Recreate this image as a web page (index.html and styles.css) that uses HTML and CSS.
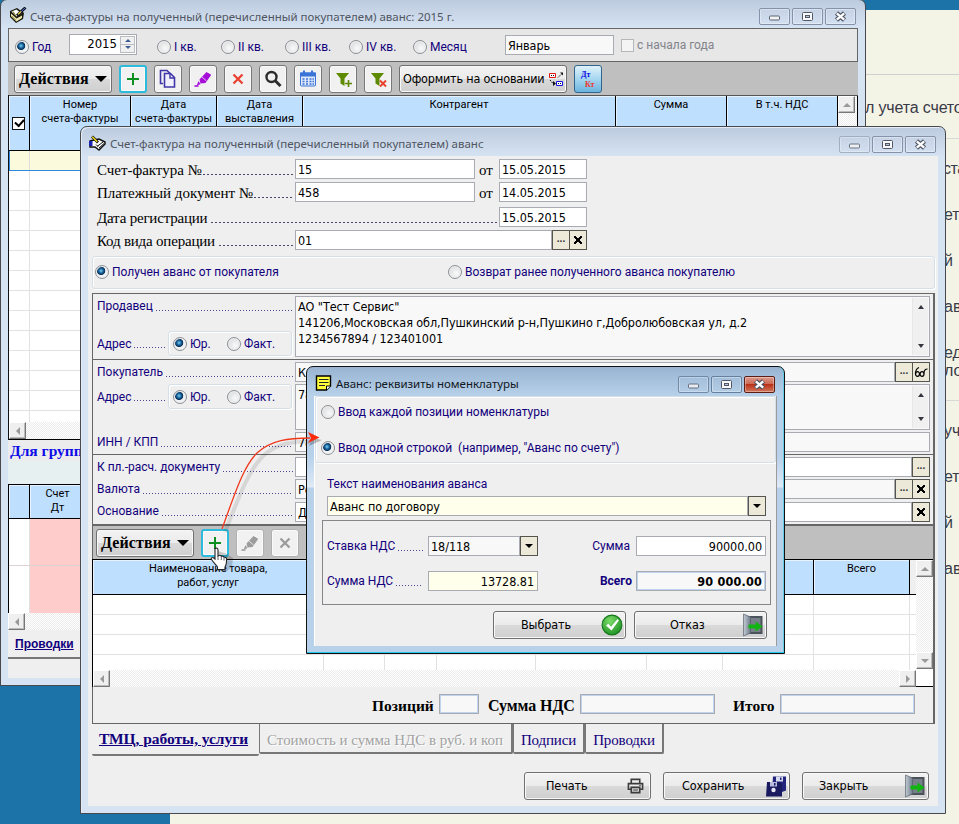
FILE: index.html
```
<!DOCTYPE html>
<html lang="ru">
<head>
<meta charset="utf-8">
<title>Счета-фактуры</title>
<link rel="stylesheet" href="styles.css">
</head>
<body>
<svg width="0" height="0" class="defs">
  <defs>
    <linearGradient id="metal" x1="0" y1="0" x2="1" y2="0"><stop offset="0" stop-color="#c4ccd4"/><stop offset="1" stop-color="#6f7c8c"/></linearGradient>
    <radialGradient id="ball" cx=".4" cy=".3" r=".8"><stop offset="0" stop-color="#7ddc6a"/><stop offset="1" stop-color="#138a1c"/></radialGradient>
    <symbol id="i-min" viewBox="0 0 29 15"><rect x="9.500" y="7" width="10" height="4" rx="1" fill="#f4f4f4" stroke="#5a6272"/></symbol>
    <symbol id="i-max" viewBox="0 0 29 15"><rect x="9.500" y="3.500" width="10" height="8" rx="1" fill="#f8f8f8" stroke="#4f5768"/><rect x="12.500" y="6.500" width="4" height="2" fill="#b8c6da" stroke="#4f5768"/></symbol>
    <symbol id="i-x" viewBox="0 0 29 15"><path d="M10.500 4l8 7M18.500 4l-8 7" stroke="#4b5263" stroke-width="4.600"/><path d="M10.800 4.300l7.400 6.400M18.200 4.300l-7.400 6.400" stroke="#fff" stroke-width="2.400"/></symbol>
    <symbol id="i-plus" viewBox="0 0 26 26"><path d="M13 7v12M7 13h12" stroke="#0e9020" stroke-width="2" fill="none"/></symbol>
    <symbol id="i-copy" viewBox="0 0 26 26"><path d="M8 17.500H5.500v-13H12l3 3" fill="none" stroke="#3f36a8" stroke-width="1.600"/><path d="M9.500 7.500h6l4 4v9.500h-10z" fill="#f2f0ff" stroke="#3f36a8" stroke-width="1.600"/><path d="M15 7.500v4.500h4.500" fill="none" stroke="#3f36a8" stroke-width="1.400"/></symbol>
    <symbol id="i-pen" viewBox="0 0 26 26"><path d="M16.500 6l5 2.500-6 8.500-5 .5-1-4z" fill="currentColor"/><path d="M12 11l4.500 4M17 5.500l5 3.500" stroke="#fff" stroke-width=".7"/><path d="M8.500 15l2 3.200-3.800 1.300z" fill="currentColor"/><path d="M4.500 20h4" stroke="currentColor" stroke-width="1.600"/></symbol>
    <symbol id="i-del" viewBox="0 0 26 26"><path d="M8.500 8.500l9 9M17.500 8.500l-9 9" stroke="currentColor" stroke-width="2.300"/></symbol>
    <symbol id="i-find" viewBox="0 0 26 26"><circle cx="11.500" cy="11" r="5" fill="none" stroke="#2c2c2c" stroke-width="2.400"/><path d="M15 14.500l5.500 5.500" stroke="#2c2c2c" stroke-width="3"/></symbol>
    <symbol id="i-cal" viewBox="0 0 26 26"><rect x="5.500" y="7" width="15" height="13" rx="1" fill="#dfe9fb" stroke="#3b74d6"/><path d="M5 6.500h16v4H5z" fill="#3b74d6"/><path d="M9 4.500v4M17 4.500v4" stroke="#3b74d6" stroke-width="2"/><path d="M7.500 13h2m1.500 0h2m1.500 0h2m1 0h1.500M7.500 15.500h2m1.500 0h2m1.500 0h2m1 0h1.500M7.500 18h2m1.500 0h2m1.500 0h2m1 0h1.500" stroke="#3b74d6" stroke-width="1.600"/></symbol>
    <symbol id="i-fadd" viewBox="0 0 26 26"><path d="M6 7h13l-4.500 5.500V20l-4-2.500v-5z" fill="#5d8a00"/><path d="M18.500 14v7M15 17.500h7" stroke="#f0f0f0" stroke-width="3.500"/><path d="M18.500 14v7M15 17.500h7" stroke="#5d8a00" stroke-width="1.600"/></symbol>
    <symbol id="i-fdel" viewBox="0 0 26 26"><path d="M6 7h13l-4.500 5.500V20l-4-2.500v-5z" fill="#5d8a00"/><path d="M15 14.500l6 6M21 14.500l-6 6" stroke="#e8412c" stroke-width="1.800"/></symbol>
    <symbol id="i-link" viewBox="0 0 15 15"><path d="M.5 1.500h6v4h-6z" fill="#fff" stroke="#e01818"/><path d="M7.500 9.500h6v4h-6z" fill="#fff" stroke="#1414e0"/><path d="M2 3.500h3M9 11.500h3" stroke="#111" stroke-dasharray="1 1"/><path d="M9 5.500l4-4M1 8l3 3.500" fill="none" stroke="#111" stroke-dasharray="1.500 1"/><path d="M11 .5h3v3zM4 9l3 2.500-3 2.500z" fill="#111"/></symbol>
    <symbol id="i-door" viewBox="0 0 21 24"><path d="M2 3h18v18H2z" fill="#4c5259"/><path d="M8 5h10v14H8z" fill="#777f88"/><path d="M1 1l7 3v16l-7 3z" fill="url(#metal)" stroke="#59636e" stroke-width=".7"/><path d="M6 11.500h7v-3l7 5-7 5v-3H6z" fill="#11b511"/></symbol>
    <symbol id="i-ok" viewBox="0 0 24 24"><circle cx="12" cy="12" r="10.800" fill="url(#ball)" stroke="#17771c" stroke-width="1.200"/><path d="M5.500 12.500l2.500-2 3 3.500 7-8.500 1.500 1.500-8 11z" fill="#fff"/></symbol>
    <symbol id="i-print" viewBox="0 0 18 18"><path d="M4.500 6V2h9v4M4 12.500H1.500v-6h15v6H14M4.500 10.500h9v5.500h-9z" fill="none" stroke="#3c3c3c" stroke-width="1.700"/><path d="M6.500 13.200h5M13 8.500h1.500" stroke="#3c3c3c" stroke-width="1.200"/></symbol>
    <symbol id="i-save" viewBox="0 0 22 22"><path d="M8 1.500h13v14l-4 1.500H7z" fill="#23257c"/><path d="M11 1.500h7v5h-7z" fill="#d8daf0"/><path d="M15 2.500h1.500V5H15z" fill="#23257c"/><path d="M2 7h12.500l2.500 2v12.500H1z" fill="#191a60"/><path d="M5 7h7v4.500H5z" fill="#b9bbe0"/><path d="M9 8h1.500v2.500H9z" fill="#191a60"/><circle cx="8.500" cy="15" r="2.200" fill="#e8e8f4"/></symbol>
    <symbol id="i-book" viewBox="0 0 18 17"><path d="M1 4l7-3 7 5-1 6-7 4-6-6z" fill="#1a1a10"/><path d="M2.500 4.500l5-2 5 4-5 3z" fill="#fff"/><path d="M2 6.500l5.500 5 5.500-3v2.500l-5.500 3.500L2 9.500z" fill="#eee8b0"/><path d="M4 4.500l3 4.500M2.500 9l4 4" stroke="#7a7a20"/><path d="M16.500 .5L8 8.500" stroke="#111" stroke-width="2.800"/><path d="M16 1L9 7.600" stroke="#4a6be0" stroke-width="1"/><path d="M12 4.500L9 7.400" stroke="#e8d832" stroke-width="1.300"/></symbol>
    <symbol id="i-hand" viewBox="0 0 18 17"><path d="M1 6l4-1 5-1 6 3v2l-6 6-4-3H1z" fill="#fff" stroke="#111" stroke-width="1.500"/><path d="M0 6h3.500v5H0z" fill="#1a22b0"/><path d="M3 1.500l6 6" stroke="#111" stroke-width="2.800"/><path d="M3.200 1.700l5 5" stroke="#f2e018" stroke-width="1.400"/><path d="M8 11.500l6-4.500M7 9.500l2 2M10 13l5-4.500" stroke="#111"/></symbol>
    <symbol id="i-note" viewBox="0 0 17 17"><path d="M1 1h14v10l-4 4H1z" fill="#ffff3c" stroke="#000" stroke-width="1.400"/><path d="M3.500 4.500h9.500M3.500 7.500h9.500M3.500 10.500h6" stroke="#222" stroke-width="1.100"/><path d="M15 11h-4v4" fill="#fff" stroke="#000"/></symbol>
    <symbol id="i-glasses" viewBox="0 0 14 12"><path d="M5 1.500C2.500 2.500 1.500 5 1.500 8" fill="none" stroke="#000" stroke-width="1.200"/><ellipse cx="3.500" cy="8" rx="2" ry="2.300" fill="none" stroke="#000" stroke-width="1.200"/><ellipse cx="8" cy="8" rx="2" ry="2.300" fill="none" stroke="#000" stroke-width="1.200"/><path d="M5.500 7.500h1M9.800 7.500c.2-3 1.500-4.500 3.700-4.500" fill="none" stroke="#000" stroke-width="1.200"/></symbol>
  </defs>
</svg>

<div class="page">
  <p class="pg l1">л учета счето</p>
  <p class="pg l2">ста</p>
  <p class="pg l3">ет</p>
  <p class="pg l4">й <a>о</a></p>
  <p class="pg l5">ав</p>
  <p class="pg l6">ед<br>ло</p>
  <p class="pg l7">уч</p>
  <p class="pg l8">ет</p>
  <p class="pg l9">й <a>с</a></p>
  <p class="pg l10">ав</p>
</div>

<!-- invoice list -->
<section class="win w1">
  <header class="cap"><svg class="ico"><use href="#i-book"/></svg><span class="ttl">Счета-фактуры на полученный (перечисленный покупателем) аванс: 2015 г.</span>
    <i class="wb"><svg><use href="#i-min"/></svg></i><i class="wb"><svg><use href="#i-max"/></svg></i><i class="wb"><svg><use href="#i-x"/></svg></i></header>
  <div class="client">
    <div class="period">
      <label class="rd on p0">Год</label>
      <div class="spin"><span>2015</span><i class="ud"><b></b><b></b></i></div>
      <label class="rd p1">I кв.</label><label class="rd p2">II кв.</label><label class="rd p3">III кв.</label><label class="rd p4">IV кв.</label><label class="rd p5">Месяц</label>
      <div class="in month">Январь</div><i class="chk off"></i><span class="dim">с начала года</span>
    </div>
    <div class="bar">
      <div class="btn act">Действия<i class="dn"></i></div>
      <div class="tb hot"><svg><use href="#i-plus"/></svg></div>
      <div class="tb"><svg><use href="#i-copy"/></svg></div>
      <div class="tb violet"><svg><use href="#i-pen"/></svg></div>
      <div class="tb red"><svg><use href="#i-del"/></svg></div>
      <div class="tb"><svg><use href="#i-find"/></svg></div>
      <div class="tb"><svg><use href="#i-cal"/></svg></div>
      <div class="tb"><svg><use href="#i-fadd"/></svg></div>
      <div class="tb"><svg><use href="#i-fdel"/></svg></div>
      <div class="btn based">Оформить на основании<svg><use href="#i-link"/></svg></div>
      <div class="tb dtkt"><b>Дт</b><b>Кт</b></div>
    </div>
    <div class="list">
      <div class="hd">
        <div class="c0"><i class="chk"></i></div><div class="c1">Номер<br>счета-фактуры</div><div class="c2">Дата<br>счета-фактуры</div><div class="c3">Дата<br>выставления</div><div class="c4">Контрагент</div><div class="c5">Сумма</div><div class="c6">В т.ч. НДС</div>
        <div class="vs"><i class="sb up"></i></div>
      </div>
      <div class="sel"></div>
      <div class="rows"></div>
      <div class="hs"><i class="sb lf"></i></div>
    </div>
    <div class="grp">Для групп</div>
    <div class="strip"></div>
    <div class="hd post"><div class="c0"></div><div class="c7">Счет<br>Дт</div></div>
    <div class="pink"><span></span><span></span></div>
    <div class="hs"><i class="sb lf"></i></div>
    <div class="tab1"><u>Проводки</u></div>
  </div>
</section>

<!-- invoice form -->
<section class="win w2">
  <header class="cap"><svg class="ico"><use href="#i-hand"/></svg><span class="ttl">Счет-фактура на полученный (перечисленный покупателем) аванс</span>
    <i class="wb pale"><svg><use href="#i-min"/></svg></i><i class="wb"><svg><use href="#i-max"/></svg></i><i class="wb"><svg><use href="#i-x"/></svg></i></header>
  <div class="client">
    <div class="head">
      <div class="row"><span class="lb">Счет-фактура №<i class="tight"></i></span><div class="in num">15</div><span class="ot">от</span><div class="in date">15.05.2015</div></div>
      <div class="row"><span class="lb">Платежный документ №<i class="tight"></i></span><div class="in num">458</div><span class="ot">от</span><div class="in date">14.05.2015</div></div>
      <div class="row r3"><span class="lb wide nar">Дата регистрации<i></i></span><div class="in date">15.05.2015</div></div>
      <div class="row"><span class="lb nar">Код вида операции<i></i></span><div class="in code">01</div><b class="fb">...</b><b class="fb x"></b></div>
    </div>
    <div class="kind"><label class="rd on">Получен аванс от покупателя</label><label class="rd">Возврат ранее полученного аванса покупателю</label></div>
    <div class="panel">
      <div class="sec seller">
        <div class="lf"><span class="lb s">Продавец<i></i></span>
          <div class="ad"><span class="lb s">Адрес<i></i></span><div class="fs"><label class="rd on">Юр.</label><label class="rd">Факт.</label></div></div></div>
        <div class="ta">АО "Тест Сервис"<br>141206,Московская обл,Пушкинский р-н,Пушкино г,Добролюбовская ул, д.2<br>1234567894 / 123401001<span class="sc"></span></div>
      </div>
      <div class="sec buyer">
        <span class="lb s">Покупатель<i></i></span><div class="fld"><div class="in ro">К</div><b class="fb">...</b><b class="fb gl"><svg><use href="#i-glasses"/></svg></b></div>
        <div class="ad"><span class="lb s">Адрес<i></i></span><div class="fs"><label class="rd on">Юр.</label><label class="rd">Факт.</label></div></div><div class="ta">78<span class="sc"></span></div>
        <span class="lb s">ИНН / КПП<i></i></span><div class="in ro">78</div>
      </div>
      <div class="sec docs">
        <span class="lb s">К пл.-расч. документу<i></i></span><div class="fld"><div class="in"></div><b class="fb">...</b></div>
        <span class="lb s">Валюта<i></i></span><div class="fld"><div class="in ro">Ро</div><b class="fb">...</b><b class="fb x"></b></div>
        <span class="lb s">Основание<i></i></span><div class="fld last"><div class="in">До</div><b class="fb x"></b></div>
      </div>
      <div class="bar b2">
        <div class="btn act">Действия<i class="dn"></i></div>
        <div class="tb hot"><svg><use href="#i-plus"/></svg></div>
        <div class="tb gray"><svg><use href="#i-pen"/></svg></div>
        <div class="tb gray"><svg><use href="#i-del"/></svg></div>
      </div>
      <div class="goods">
        <div class="gm">
          <div class="hd g"><div>Наименование товара,<br>работ, услуг</div><div></div><div></div><div></div><div></div><div></div><div></div><div>Всего</div><div class="rest"></div></div>
          <div class="g gr"><div></div><div></div><div></div><div></div><div></div><div></div><div></div><div></div><div></div></div>
          <div class="hs"><i class="sb lf"></i><i class="sb rt"></i></div>
        </div>
        <div class="vs"><i class="sb up"></i><i class="sb dw"></i></div>
      </div>
      <div class="tot"><b>Позиций</b><div class="in q1"></div><b class="m">Сумма НДС</b><div class="in q2"></div><b class="m2">Итого</b><div class="in q2"></div></div>
    </div>
    <div class="tabs"><div class="tb1"><u>ТМЦ, работы, услуги</u></div><div class="tb2">Стоимость и сумма НДС в руб. и коп</div><div class="tb3">Подписи</div><div class="tb4">Проводки</div></div>
    <div class="foot"><div class="btn f1"><span>Печать</span><svg class="pr"><use href="#i-print"/></svg></div><div class="btn f2"><span>Сохранить</span><svg><use href="#i-save"/></svg></div><div class="btn f3"><span>Закрыть</span><svg><use href="#i-door"/></svg></div></div>
  </div>
</section>

<!-- advance item dialog -->
<section class="win w3">
  <header class="cap"><svg class="ico"><use href="#i-note"/></svg><span class="ttl">Аванс: реквизиты номенклатуры</span>
    <i class="wb pale"><svg><use href="#i-min"/></svg></i><i class="wb"><svg><use href="#i-max"/></svg></i><i class="wb close"><svg><use href="#i-x"/></svg></i></header>
  <div class="client">
    <div class="mode"><label class="rd">Ввод каждой позиции номенклатуры</label><label class="rd on">Ввод одной строкой&nbsp; (например, "Аванс по счету")</label></div>
    <div class="cptn">Текст наименования аванса</div>
    <div class="fld name"><div class="in cream">Аванс по договору</div><b class="fb dd"></b></div>
    <div class="calc">
      <span class="lb s">Ставка НДС<i></i></span><div class="fld"><div class="in ro">18/118</div><b class="fb dd"></b></div><span class="rl">Сумма</span><div class="in r">90000.00</div>
      <span class="lb s">Сумма НДС<i></i></span><div class="in cream r">13728.81</div><span class="rl bb">Всего</span><div class="in r tl">90 000.00</div>
    </div>
    <div class="foot"><div class="btn d1"><span>Выбрать</span><svg><use href="#i-ok"/></svg></div><div class="btn d2"><span>Отказ</span><svg><use href="#i-door"/></svg></div></div>
  </div>
</section>

<!-- pointer and callout arrow -->
<svg class="over" width="959" height="824" viewBox="0 0 959 824">
  <path d="M225 532C240 494 249 470 263 456C277 443 295 441 310 442" fill="none" stroke="#000" stroke-opacity=".1" stroke-width="4"/>
  <path d="M222 529C236 490 244 466 257 453C271 440 289 438 310 438" fill="none" stroke="#f0391c" stroke-width="1.300"/>
  <path d="M312 438l-3 8 13-6z" fill="#000" opacity=".25"/>
  <path d="M308 432l11.500 5.500L308 443l3-5z" fill="#fb2a0a"/>
  <g transform="translate(209 546)"><path d="M9 5l9 3 6 4-1 9-6 5-6-3z" opacity=".18"/><path d="M6 2.500c1.500-1 3 0 3 1.500v6l1-.5c1-.6 2.200 0 2.400.9 1-.6 2.200-.1 2.600.9 1.200-.4 2.600.3 2.600 1.800 0 4-.6 6.500-1.600 8v2.500H8.500V21C6.500 18.500 4 15.500 2.500 13.500c-.8-1.200.8-2.600 2-1.700L6 13z" fill="#fff" stroke="#222" stroke-width="1.100"/><path d="M9 10v4M12.300 11v3M15 12v2.500" stroke="#555" stroke-width=".9"/></g>
</svg>
</body>
</html>
```
FILE: styles.css
```
* { box-sizing: border-box; }
html, body { margin: 0; height: 100%; overflow: hidden; }
body { background: #1b73a7; font: 12px/14px Roboto, "Liberation Sans", sans-serif; color: #000; position: relative; }
i { font-style: normal; }
svg { display: block; }
.defs { position: absolute; }

/* backdrop page */
.page { margin: 10px 0 0 170px; height: 814px; background: #f4f4e6; overflow: hidden;
  background-image: linear-gradient(#d0d0d0, #d0d0d0), linear-gradient(#d8d8d8, #d8d8d8), linear-gradient(#d8d8d8, #d8d8d8);
  background-size: 100% 1px; background-position: 0 64px, 0 128px, 0 390px; background-repeat: no-repeat; }
.pg { margin: 0 0 28px 774px; font: 16px/18px "Liberation Sans", Arial, sans-serif; color: #3a3b48; white-space: nowrap; height: 18px; }
.pg a { color: #2ba6d8; margin-left: 1px; }
.pg.l1 { margin-left: 695px; padding-top: 89px; height: 107px; margin-bottom: 43px; letter-spacing: -.15px; }
.pg.l2 { margin-left: 773px; letter-spacing: -.5px; }
.pg.l6 { height: 36px; margin-bottom: 42px; }

/* window frames */
.win { position: absolute; border: 1px solid #47494d; border-radius: 7px 7px 0 0; background: #d6e3f3; padding: 0 7px 7px; display: flex; flex-direction: column; }
.win .client { background: #efefef; flex: 1; overflow: hidden; }
.w1 { left: 0; top: -1px; width: 866px; height: 687px; background: linear-gradient(#bccbde, #d6e3f3 28px); }
.w2 { left: 80px; top: 126px; width: 866px; height: 688px; background: linear-gradient(#bccbde, #d6e3f3 30px); box-shadow: inset 1px 1px #e4edf7; }
.w3 { left: 306px; top: 366px; width: 479px; height: 288px; border-color: #111; background: linear-gradient(#98b4d1, #b8d1ea 29px, #b8d1ea 90px, #dfeaf6 120px, #b8d1ea 121px); box-shadow: inset 0 -1px #23c5ea, inset -1px 0 #63cde9; }
.cap { flex: none; display: flex; align-items: flex-start; height: 28px; }
.w2 .cap, .w3 .cap { height: 29px; }
.ico { width: 18px; height: 17px; margin: 8px 3px 0 1px; flex: none; }
.w1 .ico { margin-top: 7px; }
.ttl { flex: 1; font: 11.5px/16px "Noto Sans", "Open Sans", sans-serif; color: #50555f; padding-top: 9px; white-space: nowrap; }
.w1 .ttl { letter-spacing: -.01px; }
.w2 .ttl { letter-spacing: .01px; padding-left: 0; }
.w3 .ttl { color: #111822; letter-spacing: -.05px; }
.wb { width: 31px; height: 17px; margin: 8px 0 0 2px; border: 1px solid #8493a9; border-radius: 2px; box-shadow: inset 0 0 0 1px rgba(255,255,255,.35); flex: none; }
.w2 .wb, .w3 .wb { margin-top: 9px; }
.wb:last-child { margin-right: 2px; }
.wb svg { width: 29px; height: 15px; }
.wb.pale { border-color: #9aa8bb; opacity: .85; }
.w3 .wb { border-color: #64809f; }
.w3 .wb.close { background: linear-gradient(#dd9a8d, #cc6a55 45%, #b93218 50%, #d3785c); border-color: #5c1d14; }

/* radios, checks, fields */
.rd { display: flex; align-items: center; color: #12007c; white-space: nowrap; }
.rd::before { content: ""; width: 12px; height: 12px; border-radius: 50%; border: 1px solid #8b8f94; background: radial-gradient(circle at 60% 60%, #fafafa, #cfd2d4); box-shadow: inset 0 0 0 1px #f2f2f2; margin-right: 3px; flex: none; }
.rd.on::before { background: radial-gradient(circle at 42% 40%, #7fd0f0 0, #1766a0 22%, #0b2f55 38%, #eef2f5 46%); }
.in { height: 20px; border: 1px solid #a9abb2; background: #fff; font: 12.5px/17px "DejaVu Sans Condensed", "DejaVu Sans", sans-serif; font-stretch: condensed; letter-spacing: -.06px; padding: 1px 2px 0 2px; white-space: nowrap; overflow: hidden; }
.in.ro { background: #f8f8f8; }
.in.cream { background: #ffffec; }
.in.r { text-align: right; padding-right: 3px; }
.in.tl { font-weight: bold; background: #f8f8f8; box-shadow: inset 0 0 0 1px #bdd3ee; letter-spacing: .2px; }
.fld { display: flex; }
.fld .in { flex: 1; }
.fb { width: 18px; height: 20px; border: 1px solid #55554f; background: #ece9d8; text-align: center; font: bold 10px/16px "Liberation Sans", sans-serif; margin-left: -1px; flex: none; color: #333; }
.in + .fb { margin-left: 0; }
.fb.x, .fb.dd { display: flex; align-items: center; justify-content: center; }
.fb.x::before { content: ""; width: 8px; height: 8px; background: linear-gradient(45deg, transparent 43%, #000 43%, #000 57%, transparent 57%), linear-gradient(-45deg, transparent 43%, #000 43%, #000 57%, transparent 57%); }
.fb.dd::before { content: ""; border: 4px solid transparent; border-top: 4px solid #000; border-bottom: 0; }
.fb.gl { padding: 3px 1px; }
.fb.gl svg { width: 14px; height: 12px; }
.chk { display: block; width: 13px; height: 13px; border: 1px solid #111; background: #fff; }
.chk.off { border-color: #b4b6b8; background: #f4f4f4; }
.lb { display: flex; align-items: center; white-space: nowrap; font: 15px/20px "Liberation Serif", serif; letter-spacing: -.02px; }
.lb.nar { letter-spacing: -.2px; }
.lb > i { flex: 1; height: 1px; margin: 9px 1px 0 4px; background: repeating-linear-gradient(90deg, #4a4668 0 2px, transparent 2px 4px); }
.lb > i.tight { margin-left: 1px; }
.lb.s { font: 12px/20px Roboto, sans-serif; color: #12007c; letter-spacing: 0; }
.lb.s > i { margin: 8px 2px 0 3px; background: repeating-linear-gradient(90deg, #4c4694 0 1px, transparent 1px 3px); }
.ta { position: relative; border: 1px solid #a9abb2; background: #f8f8f8; font: 12.5px/16px "DejaVu Sans Condensed", "DejaVu Sans", sans-serif; letter-spacing: -.08px; padding: 2px; white-space: nowrap; overflow: hidden; }
.sc { position: absolute; right: 1px; top: 1px; bottom: 1px; width: 16px; background: #f0f0f0; display: flex; flex-direction: column; justify-content: space-between; align-items: center; padding: 7px 0; border-left: 1px solid #e6e6e6; }
.sc::before { content: ""; border: 3px solid transparent; border-bottom: 4px solid #33363c; border-top: 0; }
.sc::after { content: ""; border: 3px solid transparent; border-top: 4px solid #33363c; border-bottom: 0; }

/* buttons */
.btn { display: flex; align-items: center; height: 28px; border: 1px solid #707070; border-radius: 3px; background: linear-gradient(#f3f3f3, #ebebeb 48%, #d9d9d9 52%, #cfcfcf); box-shadow: inset 0 0 0 1px #f8f8f8; font: 12.5px/16px "DejaVu Sans Condensed", "DejaVu Sans", sans-serif; letter-spacing: -.1px; white-space: nowrap; }
.btn.act { width: 98px; font: bold 16px/20px "Liberation Serif", serif; letter-spacing: .1px; padding: 0 4px; justify-content: space-between; }
.dn { border: 6px solid transparent; border-top: 6px solid #000; border-bottom: 0; }
.tb { width: 28px; height: 28px; border: 1px solid #77787a; border-radius: 3px; background: #f1f1f1; box-shadow: inset 0 0 0 1px #fafafa; flex: none; }
.tb svg { width: 26px; height: 26px; }
.tb.hot { border: 2px solid #2fb9dd; }
.tb.hot svg { margin: -1px; }
.tb.violet { color: #a50fd8; }
.tb.red { color: #ea4130; }
.tb.gray { color: #9c9c9c; border-color: #b0b0b0; }
.tb.dtkt { background: linear-gradient(#e0f2fb, #a5d6f0 50%, #6cb4de); border-color: #31658c; display: flex; flex-direction: column; font: bold 8px/10px "Liberation Serif", serif; color: #0a0ae0; padding: 4px 0 0 6px; box-shadow: none; }
.tb.dtkt b + b { color: #f0352a; padding-left: 4px; }
.bar { display: flex; gap: 7px; height: 33px; background: #bfbfbf; padding: 3px 6px 0; }

/* scroll bars */
.hs, .vs { background: repeating-conic-gradient(#fff 0 25%, #ececec 0 50%) 0 0 / 2px 2px; display: flex; justify-content: space-between; }
.hs { height: 17px; }
.vs { width: 17px; flex-direction: column; }
.sb { width: 17px; height: 17px; background: #efefef; border: 1px solid; border-color: #fff #777 #777 #fff; box-shadow: inset -1px -1px #bbb; display: flex; align-items: center; justify-content: center; }
.sb::before { content: ""; border: 4px solid transparent; }
.sb.up::before { border-bottom-color: #999; border-top: 0; }
.sb.dw::before { border-top-color: #999; border-bottom: 0; }
.sb.lf::before { border-right-color: #999; border-left: 0; }
.sb.rt::before { border-left-color: #999; border-right: 0; }

/* list window */
.period { display: flex; align-items: center; height: 34px; background: #e7e7e7; border: 1px solid #666; padding-left: 6px; }
.period .rd { height: 20px; padding-top: 4px; }
.p0 { width: 54px; }
.spin { width: 68px; height: 21px; background: #fff; border: 1px solid #a9abb2; display: flex; align-items: center; justify-content: flex-end; font: 13px/18px "DejaVu Sans Condensed", sans-serif; margin-top: -2px; margin-right: 20px; }
.ud { width: 15px; height: 17px; border: 1px solid #b9bcc0; margin: 0 1px 0 3px; display: flex; flex-direction: column; justify-content: space-around; align-items: center; background: #f0f0f0 linear-gradient(#b9bcc0, #b9bcc0) 0 50% / 100% 1px no-repeat; }
.ud b { border: 3px solid transparent; border-bottom: 3px solid #3d5c96; border-top: 0; }
.ud b + b { border-top: 3px solid #3d5c96; border-bottom: 0; }
.p1, .p2, .p3, .p4 { width: 64px; }
.p5 { width: 92px; }
.month { width: 109px; background: #f8f8f8; }
.period .chk { margin: 0 3px 0 7px; }
.dim { color: #82838b; }
.based { width: 168px; justify-content: space-between; padding: 0 2px 0 3px; letter-spacing: -.2px; }
.based svg { width: 15px; height: 15px; }
.list { border-left: 1px solid #111; }
.hd { display: flex; background: #bfdfff; font: 11px/14px Roboto, sans-serif; text-align: center; }
.hd > div { border-right: 1px solid #000; box-shadow: inset 1px 1px #e6f3ff; padding-top: 2px; }
.list .hd { height: 56px; border-top: 1px solid #555; border-bottom: 1px solid #000; }
.c0 { width: 21px; }
.c0 .chk { margin: 19px 0 0 3px; background: #fff; position: relative; }
.c0 .chk::before { content: ""; position: absolute; left: 2px; top: 1px; width: 7px; height: 4px; border: solid #000; border-width: 0 0 2px 2px; transform: rotate(-48deg); }
.c1 { width: 101px; } .c2 { width: 86px; } .c3 { width: 86px; } .c4 { width: 313px; } .c5 { width: 111px; } .c6 { width: 111px; }
.list .hd .vs { flex: 1; padding: 0; border-right: 1px solid #000; box-shadow: none; }
.sel { height: 20px; background: #fcfadc; border: 1px solid #2f8ade; border-width: 0 0 1px 1px; background-image: linear-gradient(90deg, transparent 19px, #ddd 19px, #ddd 20px, transparent 20px); }
.rows { height: 251px; background: linear-gradient(90deg, transparent 20px, #e2e2e2 20px, #e2e2e2 21px, transparent 21px), repeating-linear-gradient(#fff 0 19px, #e2e2e2 19px 20px); }
.list .hs { height: 18px; border-bottom: 1px solid #000; }
.grp { height: 21px; font: bold 15.5px/21px "Liberation Serif", serif; color: #0d0de8; padding-left: 2px; background: #ececec; }
.strip { height: 23px; background: #e6f0f0; }
.post { height: 35px; border: 1px solid #000; border-right: 0; }
.c7 { width: 56px; }
.pink { display: flex; flex-direction: column; height: 94px; border-left: 1px solid #000; background: linear-gradient(90deg, #fff 20px, #e2e2e2 20px, #e2e2e2 21px, #ffcccc 21px); }
.pink span { height: 51px; border-bottom: 1px solid #dcd2d2; }
.pink span + span { border: 0; }
.tab1 { height: 29px; padding: 7px 7px 0; border-bottom: 2px solid #777; font: bold 12px/15px "Liberation Sans", Roboto, sans-serif; color: #12007c; }

/* form window */
.w2 .client { padding-left: 4px; }
.head { padding: 3px 0 0 5px; height: 100px; display: flex; flex-direction: column; gap: 3px; }
.row { display: flex; height: 20px; }
.r3 { margin-top: 2px; }
.head .lb { width: 198px; padding-top: 2px; }
.head .lb.wide { width: 402px; }
.num { width: 180px; }
.ot { width: 24px; padding-right: 2px; text-align: center; font: 15px/22px "Liberation Serif", serif; }
.date { width: 88px; }
.code { width: 257px; }
.kind { display: flex; width: 843px; height: 33px; border: 1px solid #d5dfe8; border-radius: 3px; box-shadow: inset 1px 1px #fff, 1px 1px #fff; padding: 0 0 2px 2px; }
.kind .rd { width: 353px; }
.panel { margin-top: 4px; width: 843px; height: 431px; border: 1px solid #666; border-right-width: 2px; }
.sec { border-bottom: 1px solid #666; padding: 2px 2px 0 4px; display: grid; grid-template-columns: 198px 635px; }
.seller { height: 66px; }
.seller .ta { height: 61px; }
.ad { display: flex; }
.ad .lb { width: 71px; height: 25px; }
.seller .ad { margin-top: 15px; }
.fs { width: 124px; height: 25px; border: 1px solid #d5dfe8; border-radius: 3px; box-shadow: inset 1px 1px #fff, 1px 1px #fff; display: flex; padding-left: 4px; }
.fs .rd { width: 54px; }
.buyer { height: 95px; grid-template-rows: 20px 46px 20px; row-gap: 2px; align-content: start; }
.docs { height: 71px; border-bottom-width: 2px; grid-template-rows: 20px 20px 20px; row-gap: 2px; align-content: start; }
.docs .last { margin-top: 1px; }
.b2 { padding-left: 3px; }
.goods { display: flex; height: 128px; border-top: 1px solid #000; border-bottom: 1px solid #000; background: #fff; margin-left: -1px; border-left: 1px solid #000; }
.gm { width: 823px; }
.g { display: grid; grid-template-columns: 231px 61px 52px 99px 111px 76px 91px 96px 6px; }
.hd.g { height: 35px; border-bottom: 1px solid #000; }
.hd .rest { background: #efefef; border: 0; box-shadow: none; }
.gr { height: 75px; background: repeating-linear-gradient(#fff 0 19px, #e2e2e2 19px 20px); }
.gr > div { border-right: 1px solid #e2e2e2; }
.gr > div:last-child { border: 0; }
.goods .vs { height: 109px; }
.tot { display: flex; align-items: center; height: 34px; padding-left: 279px; font: bold 15.5px/20px "Liberation Serif", serif; }
.tot b { width: 67px; padding-top: 3px; }
.tot .m { width: 92px; margin-left: 9px; font-size: 16px; letter-spacing: -.1px; }
.tot .m2 { width: 47px; margin-left: 18px; }
.tot .in { background: #f8f8f8; box-shadow: inset 0 0 0 1px #bdd3ee; }
.q1 { width: 40px; }
.q2 { width: 135px; }
.tabs { display: flex; font: 15px/20px "Liberation Serif", serif; color: #12007c; letter-spacing: -.15px; white-space: nowrap; }
.tabs > div { height: 30px; border: 1px solid #777; border-width: 0 2px 2px 1px; border-radius: 0 0 2px 2px; display: flex; justify-content: center; align-items: center; padding-top: 3px; }
.tabs .tb1 { width: 167px; height: 32px; border-width: 0 0 2px; font: bold 15.5px/20px "Liberation Serif", serif; letter-spacing: -.05px; padding: 0 4px 0 0; }
.tabs .tb2 { width: 254px; color: #a2a2a2; text-shadow: 1px 1px #fff; letter-spacing: -.03px; padding-right: 1px; }
.tabs .tb3 { width: 72px; }
.tabs .tb4 { width: 79px; }
.foot { display: flex; margin: 16px 0 0 432px; gap: 12px; }
.foot .btn { width: 127px; padding-left: 18px; justify-content: space-between; }
.foot svg { width: 22px; height: 24px; margin-right: 2px; }
.foot .pr { width: 17px; height: 18px; margin-right: 6px; }
.foot .f1 { padding-left: 21px; }
.foot .f3 { padding-left: 16px; }

/* dialog */
.w3 .client { border-right: 1px solid #9b9b9b; border-left: 1px solid #fff; }
.mode { height: 67px; border: 1px solid #d5dfe8; border-radius: 3px; box-shadow: inset 1px 1px #fff, 1px 1px #fff; padding: 5px 6px 4px 5px; display: flex; flex-direction: column; justify-content: space-between; }
.mode .rd { height: 20px; }
.cptn { margin: 14px 0 0 12px; height: 19px; line-height: 14px; color: #12007c; }
.name { margin-left: 12px; width: 439px; height: 20px; }
.calc { margin: 4px 0 0 7px; width: 449px; height: 85px; border: 1px solid #85868a; padding: 15px 4px 0; display: grid; grid-template-columns: 101px 110px 98px 130px; grid-template-rows: 20px 20px; row-gap: 15px; }
.calc .lb > i { margin-right: 5px; }
.rl { color: #12007c; text-align: right; line-height: 20px; padding-right: 6px; }
.bb { font-weight: bold; padding-right: 4px; }
.w3 .foot { margin: 6px 0 0 178px; gap: 8px; }
.w3 .foot .btn { width: 133px; padding-left: 27px; }
.w3 .foot .d2 { padding-left: 35px; }

.over { position: absolute; left: 0; top: 0; pointer-events: none; }
```
